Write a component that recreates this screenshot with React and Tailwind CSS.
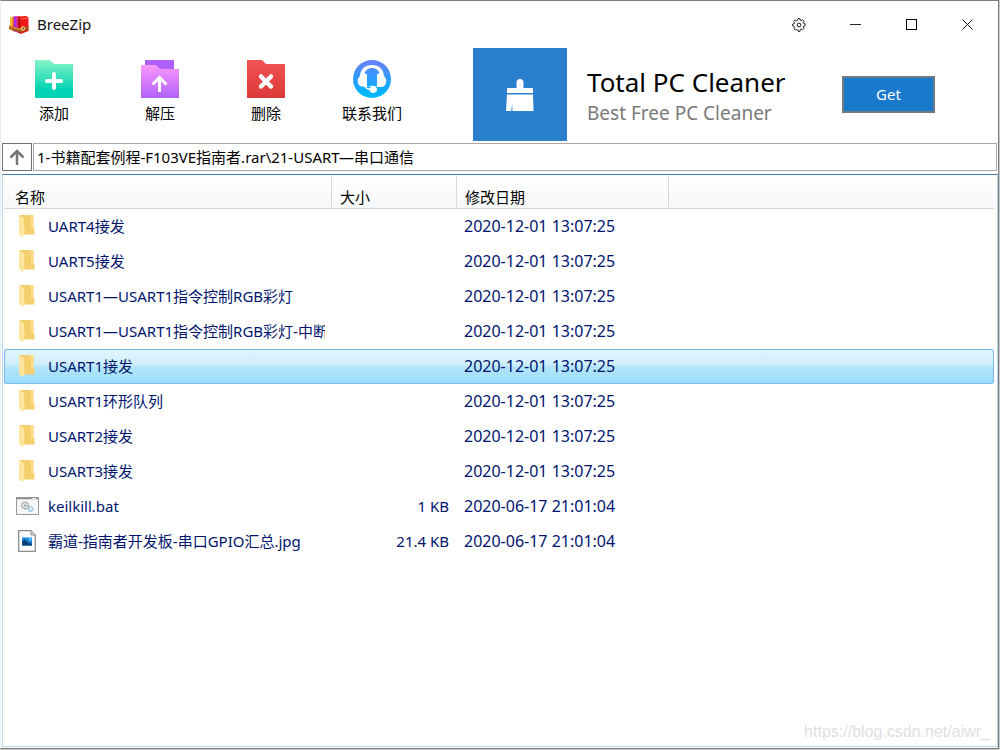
import { useState } from "react";

const FILES = [
  { name: "UART4接发", type: "folder", size: "", date: "2020-12-01 13:07:25" },
  { name: "UART5接发", type: "folder", size: "", date: "2020-12-01 13:07:25" },
  { name: "USART1—USART1指令控制RGB彩灯", type: "folder", size: "", date: "2020-12-01 13:07:25" },
  { name: "USART1—USART1指令控制RGB彩灯-中断", type: "folder", size: "", date: "2020-12-01 13:07:25" },
  { name: "USART1接发", type: "folder", size: "", date: "2020-12-01 13:07:25" },
  { name: "USART1环形队列", type: "folder", size: "", date: "2020-12-01 13:07:25" },
  { name: "USART2接发", type: "folder", size: "", date: "2020-12-01 13:07:25" },
  { name: "USART3接发", type: "folder", size: "", date: "2020-12-01 13:07:25" },
  { name: "keilkill.bat", type: "bat", size: "1 KB", date: "2020-06-17 21:01:04" },
  { name: "霸道-指南者开发板-串口GPIO汇总.jpg", type: "image", size: "21.4 KB", date: "2020-06-17 21:01:04" },
];

function AppIcon() {
  return (
    <svg width="20" height="20" viewBox="0 0 20 20" aria-hidden="true">
      <path d="M1 2.500l4-1v15l-4-2z" fill="#fbc02d" />
      <path d="M3 2l3-.8v16l-3-2z" fill="#f58a17" />
      <path d="M4.500 1.800l3-.8v16l-3-1z" fill="#a82be0" />
      <path d="M7 1.500L10 1v17l-3-1z" fill="#d9269c" />
      <path d="M9 1.500l8.500-.5 2 2v13l-8 3L9 17z" fill="#f01818" />
      <path d="M9 1.500L11.500 4v15L9 17z" fill="#b80f0f" />
      <path d="M11.500 4l8-1" stroke="#ff6a4d" strokeWidth="1" />
      <path d="M0 10.500l11.500 3 8-2.500v3.500l-8 3L0 14z" fill="#a2541a" />
      <path d="M0 10.500l11.500 3v2L0 12.500z" fill="#d1812f" />
      <circle cx="14" cy="13.500" r="2.200" fill="#f3cf7a" />
      <circle cx="14.300" cy="13.500" r="1" fill="#7c3b10" />
    </svg>
  );
}

function AddIcon() {
  return (
    <svg width="38" height="38" viewBox="0 0 38 38" aria-hidden="true">
      <defs>
        <linearGradient id="addFill" x1="0" y1="0" x2="0" y2="1">
          <stop offset="0" stopColor="#86f3c5" />
          <stop offset="0.800" stopColor="#00d2b4" />
          <stop offset="1" stopColor="#00d2b4" />
        </linearGradient>
      </defs>
      <path d="M0 0h15l4 4h19v34H0z" fill="url(#addFill)" />
      <path d="M19 14v14M12 21h14" stroke="#fff" strokeWidth="4" strokeLinecap="round" />
    </svg>
  );
}

function ExtractIcon() {
  return (
    <svg width="38" height="38" viewBox="0 0 38 38" aria-hidden="true">
      <defs>
        <linearGradient id="extractFill" x1="0" y1="0" x2="0" y2="1">
          <stop offset="0" stopColor="#fb97fd" />
          <stop offset="1" stopColor="#b062fb" />
        </linearGradient>
      </defs>
      <path d="M4 0h29v12H4z" fill="#af60fb" />
      <path d="M0 5h15l4 4h19v29H0z" fill="url(#extractFill)" />
      <path d="M18.500 32V18M11.500 24.500l7-7 7 7" fill="none" stroke="#fff" strokeWidth="3" />
    </svg>
  );
}

function DeleteIcon() {
  return (
    <svg width="38" height="38" viewBox="0 0 38 38" aria-hidden="true">
      <defs>
        <linearGradient id="deleteFill" x1="0" y1="0" x2="0" y2="1">
          <stop offset="0" stopColor="#f45454" />
          <stop offset="1" stopColor="#dc3838" />
        </linearGradient>
      </defs>
      <path d="M0 0h15l4 4h19v34H0z" fill="url(#deleteFill)" />
      <path d="M14 16.500l10 10M24 16.500l-10 10" stroke="#fff" strokeWidth="4.500" strokeLinecap="round" />
    </svg>
  );
}

function ContactIcon() {
  return (
    <svg width="38" height="38" viewBox="0 0 38 38" aria-hidden="true">
      <defs>
        <linearGradient id="contactFill" gradientUnits="userSpaceOnUse" x1="0" y1="0" x2="0" y2="38">
          <stop offset="0" stopColor="#6a80fc" />
          <stop offset="0.850" stopColor="#00b2ff" />
          <stop offset="1" stopColor="#00b8ff" />
        </linearGradient>
      </defs>
      <circle cx="19" cy="19" r="19" fill="url(#contactFill)" />
      <path d="M19 5C11.500 5 7.500 9.500 7 16c-3 3-3 7-.5 9.500 1 1 3 1.300 4.500 1 1 2 3 3 5.500 3.300 0 2 1.500 3.200 3.500 3.200 2.500 0 4-1.300 4-3.500 0-1.500-1-2.700-3-2.700h2.500c4 .7 7 .2 8.500-1.600 2-2.700 1.700-6.500-1-9.200C30.500 9.500 26.500 5 19 5z" fill="#fff" />
      <path d="M11.500 14C12 10.500 15 8 19 8s7 2.500 7.500 6c-1.500-.6-2.500-.5-2.500.5V26.500c-2-.7-4-1-6-.5-2 .3-3 .8-4 .5V14.500c0-1-1-1.100-2.500-.5z" fill="url(#contactFill)" />
      <path d="M12.500 27c1.500 1 3 1.300 4.500 1.300l1-1.500z" fill="url(#contactFill)" />
    </svg>
  );
}

function BrushIcon() {
  return (
    <svg width="28" height="34" viewBox="0 0 28 34" fill="#fff" aria-hidden="true">
      <path d="M10.500 10V4.500a3.500 3.500 0 0 1 7 0V10H26a1 1 0 0 1 1 1v4H1v-4a1 1 0 0 1 1-1z" />
      <path d="M1 16.500h26L27.500 33H6.500l-.4-7-.8 7H0z" />
    </svg>
  );
}

function GearIcon() {
  return (
    <svg width="14" height="14" viewBox="0 0 14 14" fill="none" stroke="#222" strokeWidth="1" aria-hidden="true">
      <path d="M5.700 2.200L6 .7h2l.3 1.500 1 .4 1.300-.9 1.500 1.500-.9 1.300.4 1 1.500.3v2l-1.500.3-.4 1 .9 1.300-1.500 1.500-1.300-.9-1 .4L8 13.300H6l-.3-1.500-1-.4-1.300.9-1.500-1.500.9-1.300-.4-1L.7 8V6l1.500-.3.4-1-.9-1.300 1.500-1.500 1.300.9z" />
      <circle cx="7" cy="7" r="1.900" />
    </svg>
  );
}

function FolderIcon() {
  return (
    <svg width="16" height="22" viewBox="0 0 16 22" aria-hidden="true">
      <path d="M1 0h13.500v13l1 1v5.500H1z" fill="#f5cf6c" />
      <path d="M10.500 0h4v13l-2.500 1V3z" fill="#fbdd8b" />
      <path d="M0 .5l5 2.500 .5 16L3.500 22 0 19z" fill="#ffe5a0" />
    </svg>
  );
}

function BatIcon() {
  return (
    <svg width="23" height="18" viewBox="0 0 23 18" aria-hidden="true">
      <rect x="0.500" y="0.500" width="22" height="17" fill="#f7f7f7" stroke="#9a9a9a" />
      <path d="M1 1.500h21" stroke="#8c8f92" strokeWidth="1.500" />
      <path d="M16 1.500h4" stroke="#e8e8e8" />
      <circle cx="9" cy="8.500" r="3.300" fill="#e9ecee" stroke="#90979c" strokeWidth="1.400" strokeDasharray="1.500 .7" />
      <circle cx="9" cy="8.500" r="1.100" fill="#8b9196" />
      <circle cx="14.500" cy="12" r="2.500" fill="#d5e9f5" stroke="#88b7d6" strokeWidth="1.200" strokeDasharray="1.300 .6" />
    </svg>
  );
}

function ImageIcon() {
  return (
    <svg width="18" height="22" viewBox="0 0 18 22" aria-hidden="true">
      <path d="M.7.700h12.300l4.300 4.300v16.300H.7z" fill="#fbfbfb" stroke="#8e8e8e" strokeWidth="1.300" />
      <path d="M13 .7V5h4.300" fill="#ddd" stroke="#8e8e8e" />
      <rect x="4" y="7.500" width="10" height="8" fill="#1a86dc" />
      <path d="M4 15.500v-4l3-2 4 4 1-1 2 1.500v1.500z" fill="#0a4074" />
      <path d="M11 8h2.500v2.500H11z" fill="#66c5f5" />
    </svg>
  );
}

function FileIcon({ type }) {
  if (type === "bat") return <BatIcon />;
  if (type === "image") return <ImageIcon />;
  return <FolderIcon />;
}

function TitleBar() {
  const control = "flex h-8 w-14 items-center justify-center hover:bg-gray-100";
  return (
    <header className="flex h-[47px] items-center pr-[3px] pl-2">
      <AppIcon />
      <h1 className="ml-2 flex-1 pb-0.5 text-[15px] leading-5 text-[#111]">BreeZip</h1>
      <button className={control} aria-label="Settings">
        <GearIcon />
      </button>
      <button className={control} aria-label="Minimize">
        <span className="h-px w-[11px] bg-[#222]" />
      </button>
      <button className={control} aria-label="Maximize">
        <span className="size-[11px] border border-black" />
      </button>
      <button className={control} aria-label="Close">
        <svg width="11" height="11" viewBox="0 0 11 11" stroke="#111" aria-hidden="true">
          <path d="M.5.500l10 10M10.500.500l-10 10" />
        </svg>
      </button>
    </header>
  );
}

function ToolButton({ icon, label }) {
  return (
    <button className="flex w-[106px] flex-col items-center gap-[3px] pt-3 text-[15px] leading-6 text-black">
      {icon}
      {label}
    </button>
  );
}

function Banner() {
  return (
    <aside className="ml-12 flex flex-1 items-center">
      <div className="flex h-[93px] w-[94px] shrink-0 items-center justify-center bg-[#2a80cd]">
        <BrushIcon />
      </div>
      <div className="ml-5 w-[255px] pt-1">
        <h2 className="text-[26px] leading-8 text-black">Total PC Cleaner</h2>
        <p className="text-[19px] leading-[30px] text-[#7a7a7a]">Best Free PC Cleaner</p>
      </div>
      <button className="h-[37px] w-[93px] border-2 border-[#6f7a83] bg-[#1979ca] text-[15px] text-white">Get</button>
    </aside>
  );
}

function AddressBar() {
  return (
    <div className="flex h-7 gap-px pr-px">
      <button className="flex w-[30px] items-center justify-center border border-[#707070]" aria-label="Up">
        <svg width="16" height="16" viewBox="0 0 16 16" fill="none" stroke="#767676" strokeWidth="2.500" aria-hidden="true">
          <path d="M8 16V2M1.500 8.500L8 2l6.500 6.500" />
        </svg>
      </button>
      <input
        aria-label="Path"
        className="min-w-0 flex-1 border border-[#a8a8ad] px-[3px] text-[15px] leading-6 text-black outline-none"
        defaultValue="1-书籍配套例程-F103VE指南者.rar\21-USART—串口通信"
      />
    </div>
  );
}

function FileTable() {
  const [selected, setSelected] = useState(4);
  const head =
    "h-[33px] border-b border-[#d9d9d9] bg-linear-to-b from-white to-[#f5f7f9] px-2 pt-2.5 text-left leading-5 font-normal";

  return (
    <table className="w-full table-fixed border-separate border-spacing-0 text-[15px] leading-6">
      <colgroup>
        <col className="w-[328px]" />
        <col className="w-[125px]" />
        <col className="w-[212px]" />
        <col />
      </colgroup>
      <thead className="text-black">
        <tr>
          <th className={`${head} border-r pl-[11px]`}>名称</th>
          <th className={`${head} border-r`}>大小</th>
          <th className={`${head} border-r`}>修改日期</th>
          <th className={head} aria-label="Empty" />
        </tr>
      </thead>
      <tbody className="text-[#00146e]">
        {FILES.map((file, i) => {
          const cell =
            i === selected
              ? "h-[35px] border-y border-[#7ab7ee] bg-[linear-gradient(#e2f5fe_0%,#cdeefc_46%,#b6e6fb_48%,#9bddfb_100%)] pb-[2px]"
              : "h-[35px] border-y border-transparent pb-[2px]";
          return (
            <tr key={file.name} onClick={() => setSelected(i)}>
              <td className={`${cell} rounded-l-[3px] border-l pr-[7px] pl-[10px]`}>
                <div className="flex items-center gap-[9px]">
                  <span className="flex w-6 shrink-0 justify-center">
                    <FileIcon type={file.type} />
                  </span>
                  <span className="min-w-0 overflow-hidden whitespace-nowrap">{file.name}</span>
                </div>
              </td>
              <td className={`${cell} pr-2 text-right`}>{file.size}</td>
              <td className={`${cell} pl-[7px] text-base whitespace-nowrap`}>{file.date}</td>
              <td className={`${cell} rounded-r-[3px] border-r`} />
            </tr>
          );
        })}
      </tbody>
    </table>
  );
}

export default function App() {
  return (
    <div className="flex min-h-screen bg-[#c9c9c9] pr-px pb-px font-['Noto_Sans','Noto_Sans_CJK_SC',sans-serif]">
      <div className="relative flex flex-1 flex-col border-t border-r border-b border-l border-[#7c7c7c] border-l-[#ededed] bg-white">
        <TitleBar />
        <div className="flex">
          <ToolButton icon={<AddIcon />} label="添加" />
          <ToolButton icon={<ExtractIcon />} label="解压" />
          <ToolButton icon={<DeleteIcon />} label="删除" />
          <ToolButton icon={<ContactIcon />} label="联系我们" />
          <Banner />
        </div>
        <div className="flex flex-1 flex-col gap-[3px] pt-[2px] pb-px pl-px">
          <AddressBar />
          <main className="flex-1 border border-[#b5d9ee] border-t-[#3c7fb1] pt-px pr-[3px] pl-px">
            <FileTable />
          </main>
        </div>
        <span className="pointer-events-none absolute right-2 bottom-1.5 font-['Liberation_Sans',sans-serif] text-base leading-5 text-[#e0e0e0]">
          https://blog.csdn.net/aiwr_
        </span>
      </div>
    </div>
  );
}
